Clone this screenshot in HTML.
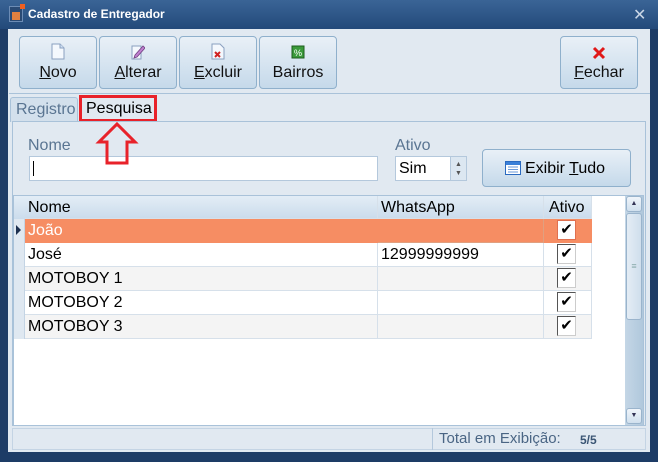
<!DOCTYPE html>
<html><head><meta charset="utf-8"><style>
*{box-sizing:border-box;margin:0;padding:0}
body{width:658px;height:462px;overflow:hidden;background:#1d3c66;font-family:"Liberation Sans","DejaVu Sans",sans-serif;position:relative}
.a{position:absolute}
.title{left:0;top:0;width:658px;height:29px;background:linear-gradient(#3a6496,#234a7a);}
.client{left:8px;top:29px;width:642px;height:423px;background:#e1e9f1}
.btn{position:absolute;top:36px;width:78px;height:53px;border:1px solid #8fb0cc;border-radius:4px;background:linear-gradient(#e9f0f7,#c5d9ea);font-size:16px;text-align:center;color:#111}
.btn .lb{position:absolute;left:0;right:0;top:27px}
.btn .ic{position:absolute;left:31px;top:6px;width:14px;height:17px}
u{text-decoration:underline}
.hdr{background:linear-gradient(#e3edf6,#cbdcec);font-size:16px;color:#111}
.cell{position:absolute;height:24px;font-size:16px;line-height:24px;padding-left:3px;border-right:1px solid #d6e0ea;border-bottom:1px solid #d6e0ea;color:#000}
.chk{position:absolute;left:557px;width:19px;height:20px;background:#fff;border:1px solid #555;border-right-color:#ccc;border-bottom-color:#ccc;font-size:15px;line-height:17px;text-align:center;font-weight:bold}
</style></head><body>
<div class="a title"></div>
<div class="a" style="left:9px;top:6px;width:14px;height:16px;background:#2a4a74;border:1px solid #6c8cb5"><div style="position:absolute;left:2px;top:5px;width:8px;height:8px;background:#e08040"></div><div style="position:absolute;right:-3px;top:-3px;width:5px;height:5px;background:#f06020"></div></div>
<div class="a" style="left:28px;top:7px;color:#fff;font-size:12px;font-weight:bold">Cadastro de Entregador</div>
<div class="a" style="left:633px;top:5px;color:#c9d6e6;font-size:16px;font-weight:bold">✕</div>
<div class="a client"></div>
<div class="btn" style="left:19px"><svg class="ic" viewBox="0 0 14 17"><path d="M1 1h8l4 4v11H1z" fill="#f4f8fd" stroke="#8aa0c0"/><path d="M9 1v4h4" fill="#cfe0f3" stroke="#8aa0c0"/></svg><div class="lb"><u>N</u>ovo</div></div>
<div class="btn" style="left:99px"><svg class="ic" viewBox="0 0 14 17"><path d="M1 3h9v13H1z" fill="#f4f8fd" stroke="#8aa0c0"/><path d="M4 12l8-9 2 2-8 9-3 1z" fill="#c080d0" stroke="#704080" stroke-width=".8"/></svg><div class="lb"><u>A</u>lterar</div></div>
<div class="btn" style="left:179px"><svg class="ic" viewBox="0 0 14 17"><path d="M1 1h8l4 4v11H1z" fill="#f4f8fd" stroke="#8aa0c0"/><path d="M4 9l5 5M9 9l-5 5" stroke="#d02020" stroke-width="2"/></svg><div class="lb"><u>E</u>xcluir</div></div>
<div class="btn" style="left:259px"><svg class="ic" viewBox="0 0 14 17"><rect x="1" y="3" width="12" height="12" fill="#3a9a3a" stroke="#1d5d1d"/><text x="7" y="13" font-size="9" fill="#fff" text-anchor="middle" font-family="Liberation Sans">%</text></svg><div class="lb">Bairros</div></div>
<div class="btn" style="left:560px"><svg class="ic" viewBox="0 0 14 17"><path d="M2 5l10 10M12 5L2 15" stroke="#e01818" stroke-width="3"/></svg><div class="lb"><u>F</u>echar</div></div>
<div class="a" style="left:9px;top:93px;width:641px;height:1px;background:#a9c2d9"></div>
<div class="a" style="left:10px;top:97px;width:68px;height:25px;border:1px solid #a9c2d9;border-bottom:none;background:#d3e0ec;color:#5a7592;font-size:16px;padding:3px 0 0 5px;border-radius:3px 3px 0 0">Registro</div>
<div class="a" style="left:80px;top:97px;width:75px;height:24px;background:#e1e9f1;font-size:16px;padding:3px 0 0 6px;color:#000">Pesquisa</div>
<div class="a" style="left:79px;top:95px;width:78px;height:27px;border:3px solid #e8222a"></div>
<div class="a" style="left:12px;top:121px;width:634px;height:305px;border:1px solid #a9c2d9"></div>
<div class="a" style="left:28px;top:137px;color:#5a7592;font-size:16px">Nome</div>
<div class="a" style="left:29px;top:156px;width:349px;height:25px;background:#fff;border:1px solid #b4c8dc"><div style="position:absolute;left:3px;top:4px;width:1px;height:15px;background:#000"></div></div>
<svg class="a" style="left:95px;top:121px" width="44" height="45" viewBox="0 0 44 45"><path d="M22 3L40 21H32V42H12V21H4z" fill="#fff" fill-opacity="0" stroke="#e8222a" stroke-width="3"/></svg>
<div class="a" style="left:395px;top:137px;color:#5a7592;font-size:16px">Ativo</div>
<div class="a" style="left:395px;top:156px;width:72px;height:25px;background:#fff;border:1px solid #b4c8dc;font-size:16px;padding:3px 0 0 3px">Sim<div style="position:absolute;right:0;top:0;width:16px;height:23px;background:#dce7f1;border-left:1px solid #b4c8dc;font-size:7px;color:#555;text-align:center;line-height:9px;padding-top:3px">▲<br>▼</div></div>
<div class="a" style="left:482px;top:149px;width:149px;height:38px;border:1px solid #8fb0cc;border-radius:4px;background:linear-gradient(#e9f0f7,#c5d9ea);font-size:16px;padding:10px 0 0 42px">Exibir <u>T</u>udo</div>
<svg class="a" style="left:505px;top:161px" width="16" height="14"><rect x=".5" y=".5" width="15" height="13" fill="#fff" stroke="#2a6ac0"/><rect x="1" y="1" width="14" height="3" fill="#3a80d8"/><path d="M3 6h10M3 8.5h10M3 11h10" stroke="#6a9ad8"/></svg>
<div class="a" style="left:13px;top:195px;width:631px;height:231px;background:#fff;border:1px solid #a9c2d9"></div>
<div class="a hdr" style="left:14px;top:196px;width:578px;height:23px"></div>
<div class="a" style="left:14px;top:219px;width:11px;height:120px;background:#dfe8f1;border-right:1px solid #c4d4e4"></div>
<div class="a" style="left:16px;top:225px;width:0;height:0;border-left:5px solid #1c3050;border-top:5px solid transparent;border-bottom:5px solid transparent"></div>
<div class="cell hdr" style="left:25px;top:196px;width:353px;height:23px;line-height:23px">Nome</div>
<div class="cell hdr" style="left:378px;top:196px;width:166px;height:23px;line-height:23px">WhatsApp</div>
<div class="cell hdr" style="left:544px;top:196px;width:48px;height:23px;line-height:23px;padding-left:5px">Ativo</div>
<div class="a" style="left:25px;top:219px;width:567px;height:24px;background:#f68d63"></div>
<div class="cell" style="left:25px;top:219px;width:353px;color:#fff;border-color:#f68d63">João</div>
<div class="a" style="left:25px;top:267px;width:567px;height:24px;background:#f4f4f4"></div>
<div class="a" style="left:25px;top:315px;width:567px;height:24px;background:#f4f4f4"></div>
<div class="cell" style="left:25px;top:243px;width:353px">José</div>
<div class="cell" style="left:25px;top:267px;width:353px">MOTOBOY 1</div>
<div class="cell" style="left:25px;top:291px;width:353px">MOTOBOY 2</div>
<div class="cell" style="left:25px;top:315px;width:353px">MOTOBOY 3</div>
<div class="cell" style="left:378px;top:219px;width:166px;border-color:#e0a080"></div>
<div class="cell" style="left:378px;top:243px;width:166px">12999999999</div>
<div class="cell" style="left:378px;top:267px;width:166px"></div>
<div class="cell" style="left:378px;top:291px;width:166px"></div>
<div class="cell" style="left:378px;top:315px;width:166px"></div>
<div class="cell" style="left:544px;top:243px;width:48px"></div>
<div class="cell" style="left:544px;top:267px;width:48px"></div>
<div class="cell" style="left:544px;top:291px;width:48px"></div>
<div class="cell" style="left:544px;top:315px;width:48px"></div>
<div class="chk" style="top:220px;border-color:#e07050">✔</div>
<div class="chk" style="top:244px">✔</div>
<div class="chk" style="top:268px">✔</div>
<div class="chk" style="top:292px">✔</div>
<div class="chk" style="top:316px">✔</div>
<div class="a" style="left:625px;top:196px;width:18px;height:229px;background:linear-gradient(90deg,#c4d6e6,#b0c8dc)"></div>
<div class="a" style="left:626px;top:196px;width:16px;height:16px;border:1px solid #9ab4cc;border-radius:3px;background:linear-gradient(#f0f5fa,#d0e0ee);font-size:7px;text-align:center;line-height:13px;color:#335">▲</div>
<div class="a" style="left:626px;top:213px;width:16px;height:107px;border:1px solid #9ab4cc;border-radius:3px;background:linear-gradient(90deg,#e4edf5,#cfdeec);font-size:9px;text-align:center;line-height:105px;color:#8aa">≡</div>
<div class="a" style="left:626px;top:408px;width:16px;height:16px;border:1px solid #9ab4cc;border-radius:3px;background:linear-gradient(#f0f5fa,#d0e0ee);font-size:7px;text-align:center;line-height:14px;color:#335">▼</div>
<div class="a" style="left:12px;top:428px;width:634px;height:22px;border:1px solid #c4d4e4;background:#e1e9f1"></div>
<div class="a" style="left:432px;top:428px;width:1px;height:22px;background:#b4c8dc"></div>
<div class="a" style="left:439px;top:430px;font-size:15px;color:#4a6584">Total em Exibição:</div>
<div class="a" style="left:580px;top:433px;font-size:12px;font-weight:bold;color:#3a5574">5/5</div>
</body></html>
